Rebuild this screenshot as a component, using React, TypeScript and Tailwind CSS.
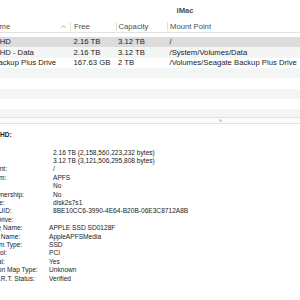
import React from "react";

const rows: { name?: string; free?: string; cap?: string; mount?: string }[] = [
  { name: "Macintosh HD", free: "2.16 TB", cap: "3.12 TB", mount: "/" },
  { name: "Macintosh HD - Data", free: "2.16 TB", cap: "3.12 TB", mount: "/System/Volumes/Data" },
  { name: "Seagate Backup Plus Drive", free: "167.63 GB", cap: "2 TB", mount: "/Volumes/Seagate Backup Plus Drive" },
  {},
  {},
  {},
  {},
  {},
];

const upper: [string, string][] = [
  ["Free:", "2.16 TB (2,158,560,223,232 bytes)"],
  ["Capacity:", "3.12 TB (3,121,506,295,808 bytes)"],
  ["Mount Point:", "/"],
  ["File System:", "APFS"],
  ["Writable:", "No"],
  ["Ignore Ownership:", "No"],
  ["BSD Name:", "disk2s7s1"],
  ["Volume UUID:", "8BE10CC6-3990-4E64-B20B-06E3C8712A8B"],
  ["Physical Drive:", ""],
];

const lower: [string, string][] = [
  ["Device Name:", "APPLE SSD SD0128F"],
  ["Media Name:", "AppleAPFSMedia"],
  ["Medium Type:", "SSD"],
  ["Protocol:", "PCI"],
  ["Internal:", "Yes"],
  ["Partition Map Type:", "Unknown"],
  ["S.M.A.R.T. Status:", "Verified"],
];

export default function App() {
  return (
    <div className="w-[300px] h-[300px] overflow-hidden bg-white font-['Liberation_Sans',Arial,sans-serif] text-[#222222]">
      {/* title bar */}
      <div className="h-[21px] flex items-center pl-[176.5px] pt-[1px]">
        <span className="text-[7.7px] font-bold text-[#4d4d4d] leading-none">iMac</span>
      </div>

      {/* table */}
      <div className="-ml-[40px] w-[340px]">
        <div className="h-[12px] flex items-center border-b border-[#e3e3e3] text-[7.7px] text-[#4e4e4e]">
          <div className="w-[110px] shrink-0 flex items-center justify-between pl-[2px] pr-[4px] h-full">
            <span>Volume Name</span>
            <svg width="5" height="3" viewBox="0 0 5 3">
              <path d="M0.5 2.6 L2.5 0.6 L4.5 2.6" stroke="#9a9a9a" strokeWidth="0.8" fill="none" />
            </svg>
          </div>
          <div className="w-[46px] shrink-0 h-[9px] flex items-center pl-[3px] border-l border-[#dedede]">Free</div>
          <div className="w-[51px] shrink-0 h-[9px] flex items-center pl-[1.5px] border-l border-[#dedede]">Capacity</div>
          <div className="flex-1 h-[9px] flex items-center pl-[2px] border-l border-[#dedede]">Mount Point</div>
        </div>
        <div className="h-[84px] overflow-hidden pt-[4px] text-[7.7px]">
          {rows.map((r, i) => (
            <div
              key={i}
              className={`h-[10.33px] flex items-center ${
                i === 0 ? "bg-[#dcdcdc]" : i % 2 === 1 ? "bg-[#f4f5f5]" : "bg-white"
              }`}
            >
              <div className="w-[110px] shrink-0 pl-[2.5px] whitespace-nowrap">{r.name}</div>
              <div className="w-[46px] shrink-0 pl-[3.5px] whitespace-nowrap">{r.free}</div>
              <div className="w-[51px] shrink-0 pl-[2px] whitespace-nowrap">{r.cap}</div>
              <div className="flex-1 pl-[2.5px] whitespace-nowrap">{r.mount}</div>
            </div>
          ))}
        </div>
      </div>

      {/* split divider */}
      <div className="h-[7px] border-y border-[#e2e2e2] bg-[#fbfbfb] flex items-center pl-[218.5px]">
        <div className="w-[3px] h-[3px] rounded-full bg-[#cfcfcf]" />
      </div>

      {/* detail pane */}
      <div className="-ml-[40px] pt-[6.5px] whitespace-nowrap text-[6.6px] leading-[8.4px]">
        <div className="font-bold pl-[5.5px]">Macintosh HD:</div>
        <div className="pt-[9.6px]">
          {upper.map(([k, v]) => (
            <div key={k} className="flex">
              <div className="w-[93px] shrink-0 pl-[10px]">{k}</div>
              <div>{v}</div>
            </div>
          ))}
          {lower.map(([k, v]) => (
            <div key={k} className="flex">
              <div className="w-[89px] shrink-0 pl-[21px]">{k}</div>
              <div>{v}</div>
            </div>
          ))}
        </div>
      </div>
    </div>
  );
}
